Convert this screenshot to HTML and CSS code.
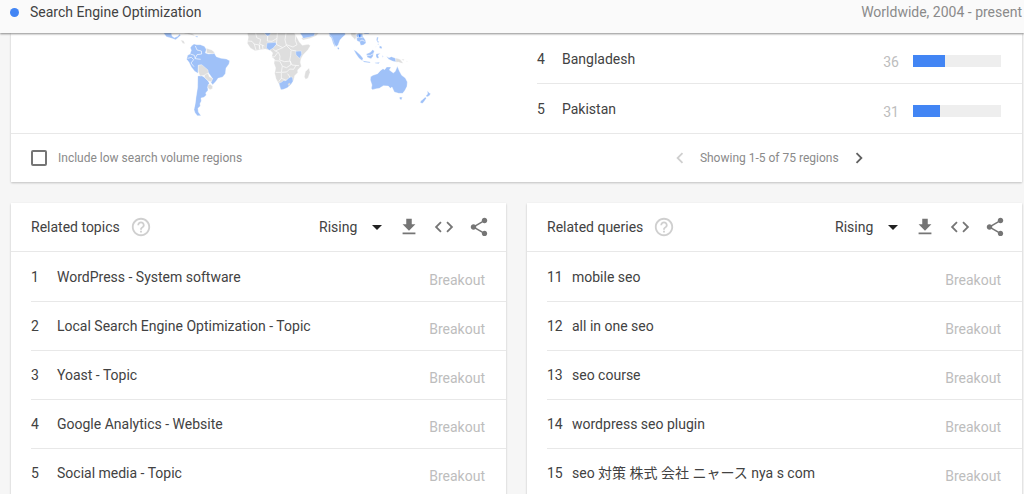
FILE: index.html
```html
<!DOCTYPE html>
<html lang="en">
<head>
<meta charset="utf-8">
<title>Search Engine Optimization - Explore</title>
<link rel="stylesheet" href="styles.css">
</head>
<body>
<svg class="sprite" aria-hidden="true">
  <symbol id="help" viewBox="0 0 24 24"><path d="M11 18h2v-2h-2v2zm1-16C6.48 2 2 6.48 2 12s4.48 10 10 10 10-4.48 10-10S17.520 2 12 2zm0 18c-4.410 0-8-3.590-8-8s3.590-8 8-8 8 3.590 8 8-3.590 8-8 8zm0-14c-2.210 0-4 1.790-4 4h2c0-1.100.9-2 2-2s2 .9 2 2c0 2-3 1.750-3 5h2c0-2.250 3-2.500 3-5 0-2.210-1.790-4-4-4z"/></symbol>
  <symbol id="download" viewBox="0 0 24 24"><path d="M19 9h-4V3H9v6H5l7 7 7-7zM5 18v2h14v-2H5z"/></symbol>
  <symbol id="embed" viewBox="0 0 24 24"><path d="M9.400 16.600L4.800 12l4.600-4.600L8 6l-6 6 6 6 1.400-1.400zm5.200 0l4.600-4.600-4.600-4.600L16 6l6 6-6 6-1.400-1.400z"/></symbol>
  <symbol id="share" viewBox="0 0 24 24"><path d="M18 16.080c-.76 0-1.440.3-1.960.77L8.910 12.700c.05-.23.09-.46.09-.7s-.04-.47-.09-.7l7.050-4.110c.54.5 1.250.81 2.040.81 1.660 0 3-1.340 3-3s-1.340-3-3-3-3 1.340-3 3c0 .24.040.47.090.7L8.040 9.810C7.500 9.310 6.790 9 6 9c-1.660 0-3 1.340-3 3s1.340 3 3 3c.79 0 1.500-.31 2.040-.81l7.120 4.160c-.05.21-.08.43-.08.65 0 1.610 1.310 2.920 2.920 2.920s2.920-1.310 2.920-2.920-1.310-2.920-2.920-2.920z"/></symbol>
  <symbol id="prev" viewBox="0 0 24 24"><path d="M15.410 7.410L14 6l-6 6 6 6 1.410-1.410L10.830 12z"/></symbol>
  <symbol id="next" viewBox="0 0 24 24"><path d="M10 6L8.590 7.410 13.170 12l-4.580 4.590L10 18l6-6z"/></symbol>
</svg>

<header class="topbar">
  <span class="dot"></span>
  <span class="term">Search Engine Optimization</span>
  <span class="scope">Worldwide, 2004 - present</span>
</header>

<main class="page">
  <section class="card regions">
    <div class="regions-body">
      <svg class="map" viewBox="0 0 870 255" role="img" aria-label="Interest by region">
        <g transform="translate(0 -15)">
          <g class="hit">
            <path d="M41 15L64 15L66 24L73 29L83 25L89 18L92 22L84 29L77 35L65 31L49 26z"/>
            <path d="M125 53L132 48L140 50L151 50L163 55L169 64L166 75L176 78L193 76L199 86L213 91L229 93L239 98L237 108L228 120L226 137L218 147L204 151L198 160L188 170L182 162L188 152L178 138L166 124L154 111L145 112L144 136L134 130L124 117L117 103L110 94L113 82L120 78L124 67L121 59z"/>
            <path d="M143 144L155 143L162 147L174 158L178 166L173 177L174 187L167 195L169 201L162 208L153 210L154 219L150 227L151 234L144 241L145 252L153 263L142 263L135 254L132 245L135 230L138 207L143 178z"/>
            <path d="M137 24L144 25L143 28L137 27z"/>
          </g>
          <g class="miss">
            <path d="M92 36L101 38L105 47L98 46zM101 17L111 13L129 18L134 23L124 21L111 17z"/>
            <path d="M169 61L185 66L194 73L188 77L170 75z"/>
            <path d="M145 112L155 110L166 119L174 126L175 135L164 142L150 144L145 131z"/>
            <path d="M164 140L174 136L178 146L187 151L185 161L176 160L163 147z"/>
            <path d="M174 170L181 169L188 175L187 182L180 185L174 180z"/>
          </g>
          <path class="border" d="M121 78L133 82L136 92L152 94M136 54L141 66L154 69L155 78L141 80L135 92M113 91L124 88L131 95L123 105L132 116M142 144L139 179L137 207L133 236"/>
        </g>
        <g transform="translate(255 -15)">
          <g class="miss">
            <path d="M37 15L178 15L185 27L193 42L202 52L220 49L226 53L219 65L204 81L198 92L196 103L199 115L188 126L188 134L179 143L176 157L164 171L154 180L138 185L132 169L123 152L119 136L122 120L117 106L119 94L110 87L113 75L107 68L91 63L76 65L60 68L46 60L37 46L40 28z"/>
            <path d="M222 120L225 133L219 150L212 154L208 147L211 131z"/>
            <path d="M235 15L251 15L244 23L226 31L204 36L199 31L223 24z"/>
          </g>
          <path class="border" d="M62 15L65 29L77 34L74 48L88 54M88 15L98 24L97 39L111 40L126 31L127 15M126 31L124 49L113 61L121 69L143 59L154 52L150 35L153 15M154 50L174 57L186 50L181 37L183 15M154 52L168 66L184 69M121 69L131 74L135 85L134 96L149 101L166 99L168 111M168 68L167 83L164 97L171 111L192 113M119 98L134 99L142 114L139 133L122 133M139 133L155 132L164 123L176 124L183 112M143 115L155 119L168 110M139 135L139 151L131 161M139 151L154 157L165 148L158 137M38 39L51 40L58 49L63 66M57 48L73 51L75 64M73 50L73 64M82 51L84 63M124 49L143 59M108 86L118 87L128 74"/>
          <g class="hit">
            <path d="M88 15L108 15L102 23L96 24zM96 45L122 43L124 49L115 60L103 67L94 60zM182 70L199 69L200 80L194 91L183 81zM195 15L240 15L237 24L222 28L204 31L201 23zM284 15L300 15L300 58L294 46L289 29L283 24z"/>
            <path d="M132 165L139 163L145 158L153 158L161 150L169 146L173 151L174 160L169 168L157 179L146 184L138 185L135 177z"/>
          </g>
          <path class="lake" d="M158 168L164 164L167 169L161 174z"/>
        </g>
        <g transform="translate(510 -15)">
          <g class="hit">
            <path d="M26 15L75 15L76 20L68 27L60 36L54 52L48 56L43 48L37 29zM54 57L58 61L55 65L52 61z"/>
            <path d="M108 20L117 16L128 17L128 25L136 36L138 45L130 51L122 52L119 42L111 38zM131 15L148 15L146 18L134 18z"/>
            <path d="M101 65L109 70L122 82L129 91L127 98L117 91L108 78zM129 98L139 100L151 102L150 105L131 102zM139 78L151 73L158 65L163 69L160 77L159 85L153 92L142 88zM168 78L181 76L174 82L177 90L171 91L168 85zM171 27L175 28L173 38L178 42L174 44L169 36zM179 53L186 56L185 62L178 60zM172 48L176 47L176 51zM168 56L171 51L165 60zM199 85L207 89L214 86L227 91L228 102L217 99L206 94zM188 81L190 87L187 88zM164 104L179 103L176 107L166 106z"/>
            <path d="M152 146L159 142L173 137L181 128L189 122L194 125L200 117L213 117L208 126L220 135L226 130L232 115L238 129L245 142L256 150L262 162L261 175L255 187L248 196L236 196L223 192L216 177L211 181L205 174L190 173L178 181L169 182L157 185L154 181L156 171L151 156z"/>
            <path d="M239 207L247 208L244 216L239 213zM322 188L328 195L332 197L328 203L321 207L318 203L323 198zM316 207L319 211L314 218L308 226L301 225L302 219L309 214z"/>
          </g>
          <g class="miss"><path d="M92 15L107 15L109 27L105 36L101 30L94 24zM227 90L240 94L250 106L243 105L235 102L228 103zM244 94L253 94L250 98zM258 98L264 101L261 102z"/></g>
          <path class="border" d="M110 30L118 26L128 29M119 40L126 36L134 40M140 82L151 82L160 77"/>
          <path class="top" d="M117 20L121 19L122 26L117 27z"/>
        </g>
      </svg>
      <ol class="countries" start="4">
        <li><span class="rank">4</span><span class="name">Bangladesh</span><span class="value">36</span><span class="bar"><span class="fill" style="width:36%"></span></span></li>
        <li><span class="rank">5</span><span class="name">Pakistan</span><span class="value">31</span><span class="bar"><span class="fill" style="width:31%"></span></span></li>
      </ol>
    </div>
    <div class="regions-foot">
      <label class="low"><input type="checkbox">Include low search volume regions</label>
      <nav class="pager" aria-label="Regions pages">
        <button type="button" class="page-btn" disabled aria-label="Previous"><svg><use href="#prev"/></svg></button>
        <span>Showing 1-5 of 75 regions</span>
        <button type="button" class="page-btn" aria-label="Next"><svg><use href="#next"/></svg></button>
      </nav>
    </div>
  </section>

  <div class="columns">
    <section class="card topics">
      <div class="card-head">
        <h2>Related topics</h2>
        <button type="button" class="icon help" aria-label="Help"><svg><use href="#help"/></svg></button>
        <span class="sort"><select aria-label="Sort topics"><option>Rising</option><option>Top</option></select></span>
        <button type="button" class="icon" aria-label="Download"><svg><use href="#download"/></svg></button>
        <button type="button" class="icon" aria-label="Embed"><svg><use href="#embed"/></svg></button>
        <button type="button" class="icon" aria-label="Share"><svg><use href="#share"/></svg></button>
      </div>
      <ol class="terms">
        <li><span class="rank">1</span><span class="name">WordPress - System software</span><span class="growth">Breakout</span></li>
        <li><span class="rank">2</span><span class="name">Local Search Engine Optimization - Topic</span><span class="growth">Breakout</span></li>
        <li><span class="rank">3</span><span class="name">Yoast - Topic</span><span class="growth">Breakout</span></li>
        <li><span class="rank">4</span><span class="name">Google Analytics - Website</span><span class="growth">Breakout</span></li>
        <li><span class="rank">5</span><span class="name">Social media - Topic</span><span class="growth">Breakout</span></li>
      </ol>
    </section>
    <section class="card queries">
      <div class="card-head">
        <h2>Related queries</h2>
        <button type="button" class="icon help" aria-label="Help"><svg><use href="#help"/></svg></button>
        <span class="sort"><select aria-label="Sort queries"><option>Rising</option><option>Top</option></select></span>
        <button type="button" class="icon" aria-label="Download"><svg><use href="#download"/></svg></button>
        <button type="button" class="icon" aria-label="Embed"><svg><use href="#embed"/></svg></button>
        <button type="button" class="icon" aria-label="Share"><svg><use href="#share"/></svg></button>
      </div>
      <ol class="terms">
        <li><span class="rank">11</span><span class="name">mobile seo</span><span class="growth">Breakout</span></li>
        <li><span class="rank">12</span><span class="name">all in one seo</span><span class="growth">Breakout</span></li>
        <li><span class="rank">13</span><span class="name">seo course</span><span class="growth">Breakout</span></li>
        <li><span class="rank">14</span><span class="name">wordpress seo plugin</span><span class="growth">Breakout</span></li>
        <li><span class="rank">15</span><span class="name" lang="ja">seo 対策 株式 会社 ニャース nya s com</span><span class="growth">Breakout</span></li>
      </ol>
    </section>
  </div>
</main>
</body>
</html>
```

FILE: styles.css
```css
* { box-sizing: border-box; }

body {
  margin: 0;
  height: 100vh;
  overflow: hidden;
  background: #f6f6f6;
  color: #424242;
  font: 14px/20px Roboto, "Noto Sans CJK JP", sans-serif;
}

.sprite { display: none; }

ol { list-style: none; margin: 0; padding: 0; }

button {
  border: 0;
  padding: 0;
  background: none;
  color: inherit;
}

svg { display: block; fill: currentColor; }

.topbar {
  position: relative;
  z-index: 1;
  display: flex;
  align-items: center;
  height: 33px;
  padding: 0 2px 9px 10px;
  background: #fafafa;
  box-shadow: 0 1px 2px rgba(0, 0, 0, 0.45);
}

.dot {
  width: 9px;
  height: 9px;
  margin-right: 11px;
  border-radius: 50%;
  background: #4285f4;
}

.scope { margin-left: auto; color: #8a8a8a; }

.page { padding: 0 2px 0 11px; }

.card {
  background: #fff;
  box-shadow: 0 1px 2px rgba(0, 0, 0, 0.22);
}

.regions-body {
  display: grid;
  grid-template-columns: 1fr 1fr;
  column-gap: 21px;
  border-bottom: 1px solid #e8e8e8;
}

.map { width: 290px; height: 85px; margin-left: 139px; }
.hit { fill: #9fc1f8; stroke: #fff; stroke-width: 1; }
.miss { fill: #dedede; stroke: #fff; stroke-width: 1; }
.border { fill: none; stroke: #fff; stroke-width: 2; }
.lake { fill: #dedede; }
.top { fill: #4285f4; }

.countries { padding: 2px 0 0 10px; }

.countries li,
.terms li {
  display: flex;
  align-items: center;
  height: 49px;
  border-bottom: 1px solid #e8e8e8;
}

.countries li:last-child { border-bottom: 0; }

.rank { flex: none; width: 25px; }

.value { margin: 6px 14px 0 auto; color: #bdbdbd; }

.bar {
  width: 88px;
  height: 12px;
  margin: 4px 21px 0 0;
  background: #eee;
}

.fill { display: block; height: 100%; background: #4285f4; }

.regions-foot {
  display: grid;
  grid-template-columns: 1fr 1fr;
  align-items: center;
  height: 48px;
  color: #8a8a8a;
  font-size: 12px;
}

.low { display: flex; align-items: center; gap: 11px; padding-left: 20px; }

.low input {
  appearance: none;
  width: 16px;
  height: 16px;
  margin: 0;
  border: 2px solid #757575;
  border-radius: 2px;
}

.pager {
  display: flex;
  align-items: center;
  justify-content: center;
  gap: 9px;
}

.page-btn { color: #616161; }
.page-btn:disabled { color: #cfcfcf; }
.page-btn svg { width: 22px; height: 22px; }

.columns {
  display: grid;
  grid-template-columns: 1fr 1fr;
  gap: 21px;
  margin-top: 21px;
}

.card-head {
  display: flex;
  align-items: center;
  height: 49px;
  padding: 0 16px 0 20px;
  border-bottom: 1px solid #e8e8e8;
}

h2 { margin: 0; font-size: 14px; font-weight: 400; }

.icon { margin-left: 13px; color: #757575; }
.icon svg { width: 22px; height: 22px; }
.icon.help { margin-left: 10px; color: #cfcfcf; }

.sort {
  display: flex;
  align-items: center;
  margin-left: auto;
}

.sort::after {
  content: "";
  margin: 0 3px 0 -10px;
  border: 5px solid transparent;
  border-top-color: #212121;
  border-bottom: 0;
  pointer-events: none;
}

select {
  appearance: none;
  width: 63px;
  border: 0;
  padding: 0;
  background: none;
  color: inherit;
  font: inherit;
}

.terms { padding-top: 1px; }
.terms li { margin-left: 20px; padding-right: 21px; }
.topics .rank { width: 26px; }
.growth { margin: 6px 0 0 auto; color: #bdbdbd; }
```
